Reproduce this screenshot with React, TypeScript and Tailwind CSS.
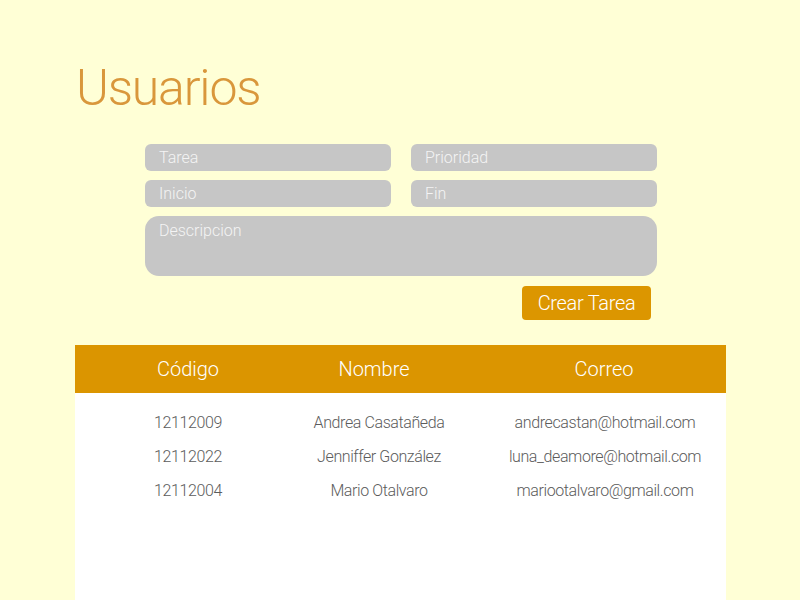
import React from "react";

const rows = [
  { codigo: "12112009", nombre: "Andrea Casatañeda", correo: "andrecastan@hotmail.com" },
  { codigo: "12112022", nombre: "Jenniffer González", correo: "luna_deamore@hotmail.com" },
  { codigo: "12112004", nombre: "Mario Otalvaro", correo: "mariootalvaro@gmail.com" },
];

const font = { fontFamily: "Roboto, 'Liberation Sans', sans-serif" };

const Field: React.FC<{ label: string }> = ({ label }) => (
  <div className="h-[27px] rounded-[6px] bg-[#c6c6c6] px-[14px] text-[16px] leading-[27px] font-light text-[#f4f4f4]">
    {label}
  </div>
);

const App: React.FC = () => {
  return (
    <div className="min-h-[600px] w-[800px] overflow-hidden bg-[#ffffd6]" style={font}>
      <div className="ml-[75px] w-[651px] pt-[58px]">
        <h1 className="ml-[1px] text-[50px] leading-[60px] font-light tracking-[-1.2px] text-[#d9973b]">Usuarios</h1>

        <div className="ml-[70px] mt-[26px] w-[512px]">
          <div className="grid grid-cols-2 gap-x-[20px] gap-y-[9px]">
            <Field label="Tarea" />
            <Field label="Prioridad" />
            <Field label="Inicio" />
            <Field label="Fin" />
          </div>
          <div className="mt-[9px] h-[60px] rounded-[14px] bg-[#c6c6c6] px-[14px] pt-[3px] text-[16px] font-light text-[#f4f4f4]">
            Descripcion
          </div>
          <div className="mt-[10px] flex justify-end pr-[6px]">
            <button className="h-[34px] w-[129px] rounded-[4px] bg-[#dc9600] text-[20px] font-light tracking-[-0.3px] text-white">
              Crear Tarea
            </button>
          </div>
        </div>

        <div className="mt-[25px] bg-white pb-[120px]">
          <div className="grid h-[48px] grid-cols-[176px_196px_264px] items-center bg-[#db9500] pl-[25px] text-center text-[20px] font-light text-white">
            <span>Código</span>
            <span>Nombre</span>
            <span>Correo</span>
          </div>
          <div className="pt-[13px]">
            {rows.map((r) => (
              <div
                key={r.codigo}
                className="grid h-[34px] grid-cols-[176px_206px_246px] items-center pl-[25px] text-center text-[16px] font-light tracking-[-0.4px] text-[#5c5c5c]"
              >
                <span>{r.codigo}</span>
                <span>{r.nombre}</span>
                <span>{r.correo}</span>
              </div>
            ))}
          </div>
        </div>
      </div>
    </div>
  );
};

export default App;
